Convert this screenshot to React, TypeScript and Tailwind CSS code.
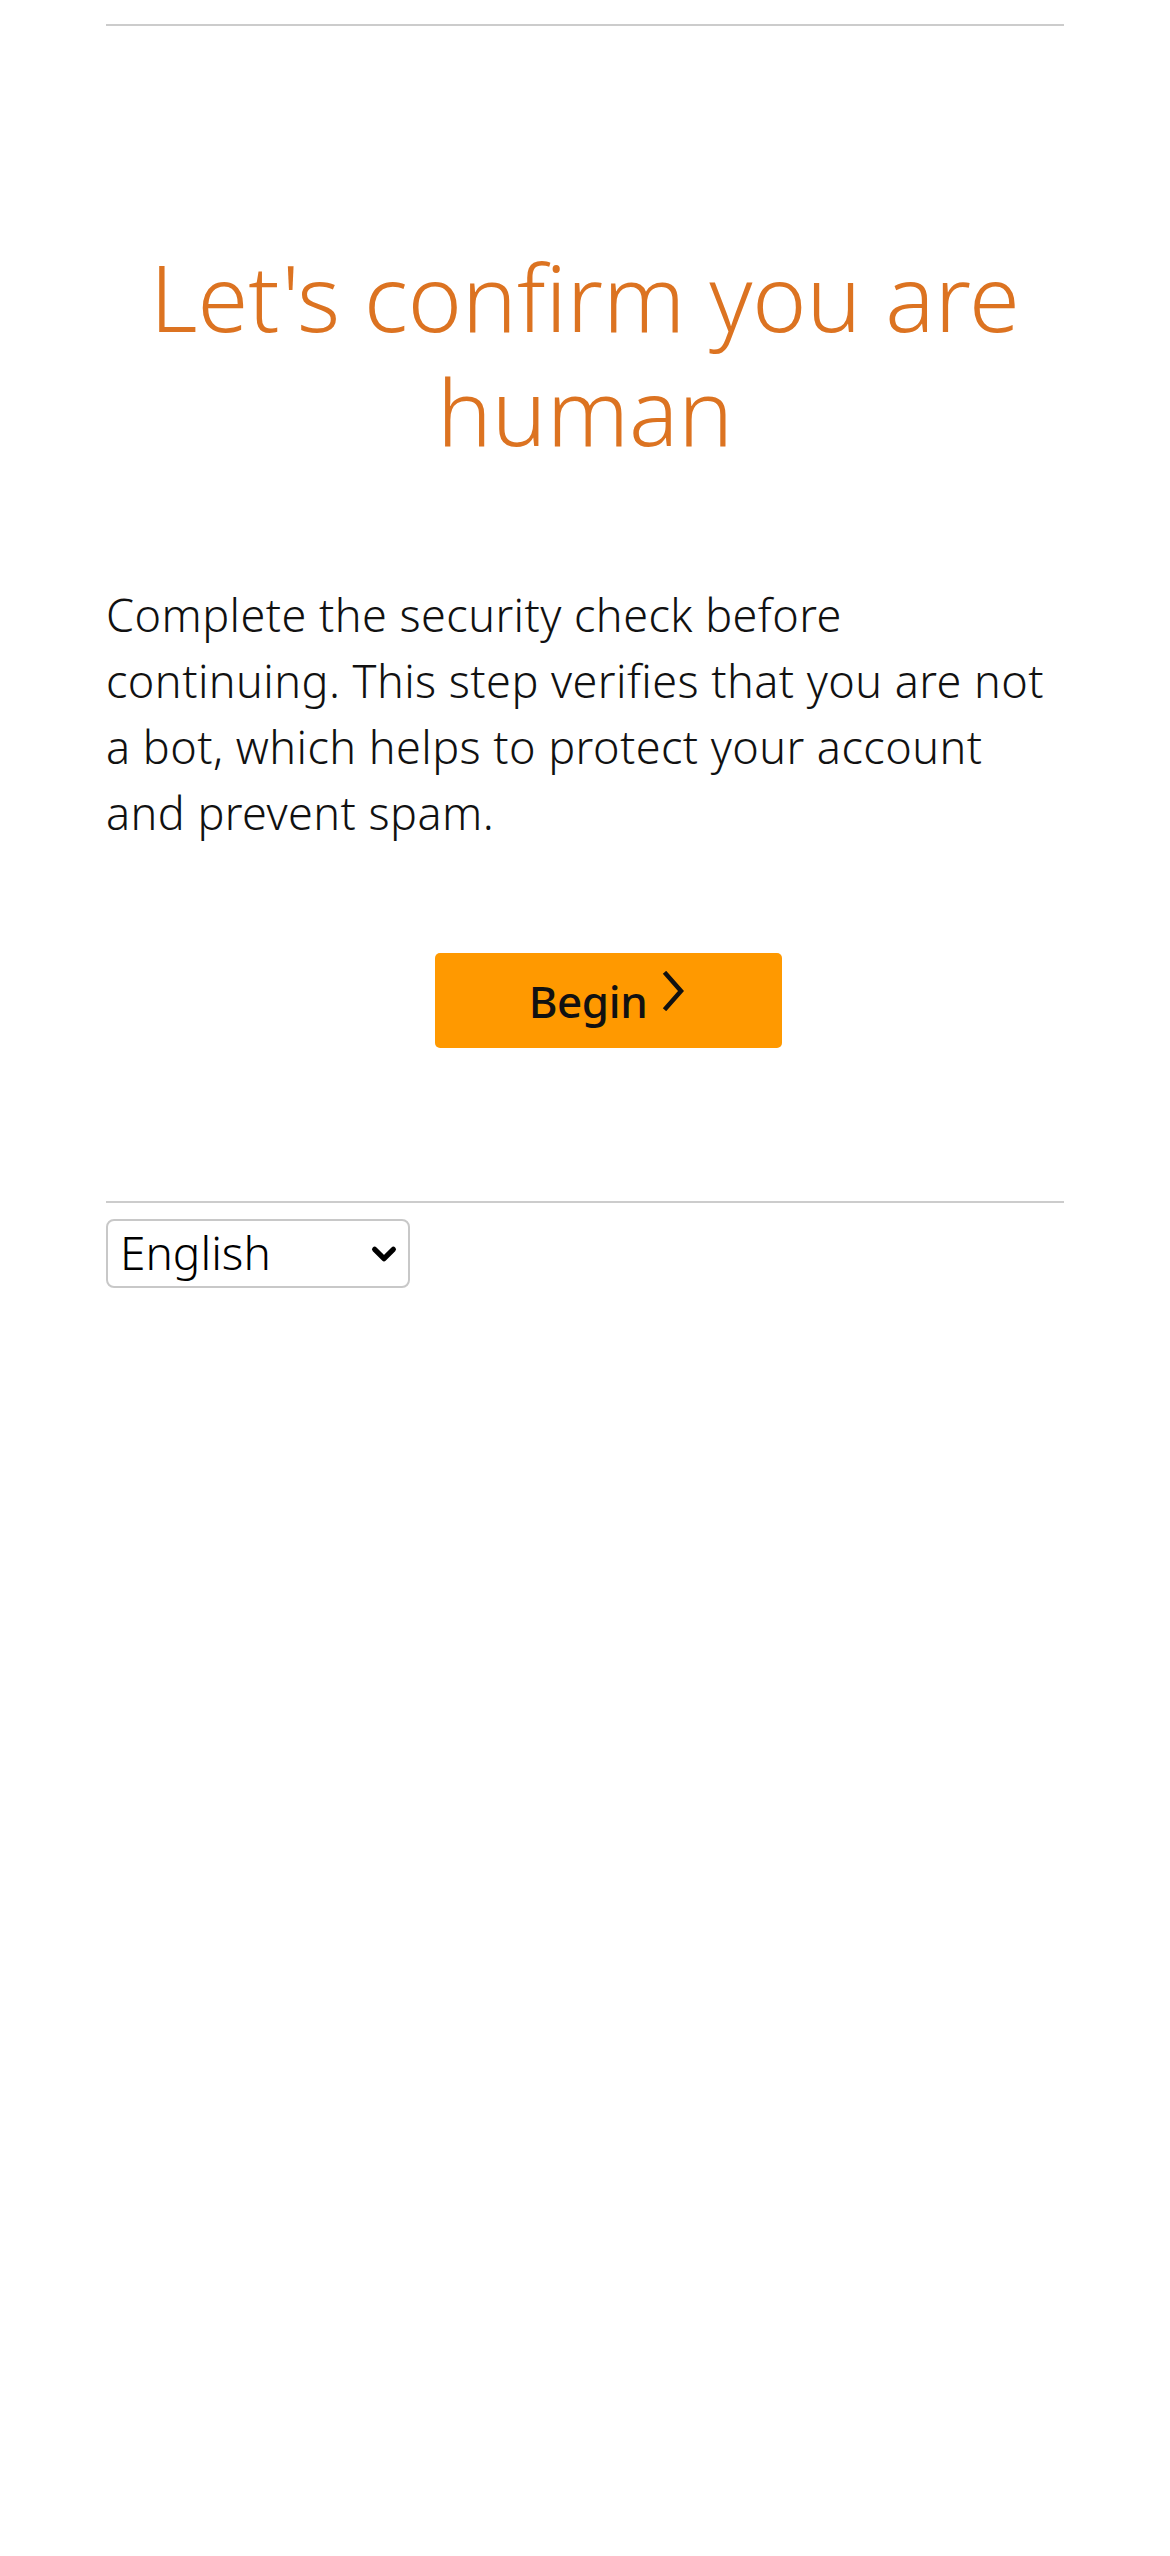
import React from 'react'

const FONT = { fontFamily: '"Noto Sans", "Open Sans", sans-serif' }

function Chevron({ className }: { className?: string }) {
  return (
    <svg viewBox="0 0 26 40" className={className} fill="none" stroke="currentColor" strokeWidth={4.5} strokeLinecap="square">
      <path d="M5 3 L20 20 L5 37" />
    </svg>
  )
}

export default function App() {
  return (
    <div className="min-h-[2556px] bg-white text-black" style={FONT}>
      <div className="w-[958px] mx-auto pt-[24px]">
        <div className="h-[2px] bg-[#cccccc]" />

        {/* Heading */}
        <h1 className="mt-[214px] text-center text-[92px] leading-[114px] font-light text-[#dc7321]">
          Let's confirm you are human
        </h1>

        {/* Message */}
        <p className="mt-[114px] text-[45px] leading-[66px] font-light tracking-[0.01em] text-[#111111]">
          Complete the security check before continuing. This step verifies that you are not a bot, which helps to protect your account and prevent spam.
        </p>

        {/* Begin */}
        <div className="mt-[107px] flex justify-center">
          <button className="ml-[46px] w-[347px] h-[95px] rounded-[5px] bg-[#ff9900] flex items-center justify-center gap-[14px] text-[44px] font-medium tracking-[-0.01em] text-[#111111]">
            <span>Begin</span>
            <Chevron className="w-[26px] h-[40px] -mt-[20px]" />
          </button>
        </div>

        <div className="mt-[153px] h-[2px] bg-[#cccccc]" />

        {/* Language */}
        <div className="mt-[16px]">
          <div className="w-[304px] h-[69px] rounded-[8px] border-2 border-[#c8c8c8] flex items-center justify-between pl-[12px] pr-[10px]">
            <span className="text-[46px] leading-none font-light -mt-[4px]">English</span>
            <svg viewBox="0 0 24 24" className="w-[28px] h-[28px]" fill="none" stroke="currentColor" strokeWidth={4.5} strokeLinecap="round" strokeLinejoin="round">
              <path d="M4 8 L12 16 L20 8" />
            </svg>
          </div>
        </div>
      </div>
    </div>
  )
}
